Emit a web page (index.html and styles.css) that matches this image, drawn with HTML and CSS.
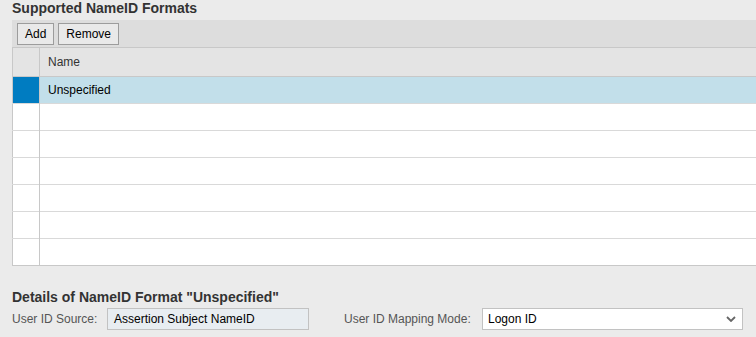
FILE: index.html
```html
<!DOCTYPE html>
<html lang="en">
<head>
  <meta charset="UTF-8" />
  <title>Supported NameID Formats</title>
  <link rel="stylesheet" href="styles.css">
</head>
<body>

<div class="page">
  <h2 class="section-title">Supported NameID Formats</h2>

  <div class="toolbar">
    <button class="btn">Add</button>
    <button class="btn">Remove</button>
  </div>

  <table class="grid">
    <thead>
      <tr><th class="sel"></th><th>Name</th></tr>
    </thead>
    <tbody>
      <tr class="selected"><td class="sel"></td><td>Unspecified</td></tr>
      <tr><td class="sel"></td><td></td></tr>
      <tr><td class="sel"></td><td></td></tr>
      <tr><td class="sel"></td><td></td></tr>
      <tr><td class="sel"></td><td></td></tr>
      <tr><td class="sel"></td><td></td></tr>
      <tr><td class="sel"></td><td></td></tr>
    </tbody>
  </table>

  <h2 class="section-title details">Details of NameID Format "Unspecified"</h2>

  <div class="form-row">
    <label class="lbl lbl-source">User ID Source:</label>
    <div class="field readonly">Assertion Subject NameID</div>
    <label class="lbl lbl-mode">User ID Mapping Mode:</label>
    <div class="field select">
      <span>Logon ID</span>
      <svg width="10" height="6" viewBox="0 0 10 6"><path d="M1 1 L5 5 L9 1" fill="none" stroke="#666" stroke-width="1.8"/></svg>
    </div>
  </div>
</div>

</body>
</html>
```

FILE: styles.css
```css
:root {
  --bg: #ebebeb;
  --toolbar: #dddddd;
  --header: #e4e4e4;
  --line: #c8c8c8;
  --row-line: #d9d9d9;
  --selected: #c2dfea;
  --accent: #007cc1;
  --text: #000;
  --muted: #555;
}

* { box-sizing: border-box; }

body {
  margin: 0;
  background: var(--bg);
  font-family: "Liberation Sans", Arial, sans-serif;
  font-size: 12px;
  color: var(--text);
  overflow: hidden;
}

.page {
  padding-left: 12px;
}

.section-title {
  margin: 0 0 4px;
  font-size: 14px;
  line-height: 16px;
  font-weight: bold;
  color: #333;
}

.section-title.details {
  margin: 23px 0 3px;
}

.toolbar {
  display: flex;
  align-items: center;
  gap: 4px;
  height: 27px;
  padding-left: 5px;
  background: var(--toolbar);
}

.btn {
  height: 22px;
  padding: 0 7px;
  font-family: inherit;
  font-size: 12px;
  color: #000;
  background: #e9e9e9;
  border: 1px solid #9c9c9c;
  border-radius: 0;
}

.grid {
  width: 100%;
  border-collapse: collapse;
  border-top: 1px solid var(--line);
  border-left: 1px solid var(--line);
  border-bottom: 1px solid var(--line);
}

.grid th {
  height: 29px;
  padding: 0 8px;
  text-align: left;
  font-weight: normal;
  color: #333;
  background: var(--header);
  border-bottom: 1px solid var(--line);
}

.grid td {
  height: 27px;
  padding: 0 8px;
  background: #fff;
  border-top: 1px solid var(--row-line);
}

.grid tbody tr:first-child td {
  border-top: 0;
  height: 27px;
}

.grid .sel {
  width: 27px;
  padding: 0;
  border-right: 1px solid var(--line);
}

.grid tr.selected td {
  background: var(--selected);
}

.grid tr.selected td.sel {
  background: var(--accent);
}

.form-row {
  display: flex;
  align-items: center;
  height: 22px;
}

.lbl {
  color: var(--muted);
}

.lbl-source { width: 95px; }
.lbl-mode { width: 138px; margin-left: 35px; }

.field {
  height: 22px;
  line-height: 20px;
  border: 1px solid #c2c2c2;
  padding: 0 6px;
}

.readonly {
  width: 202px;
  background: #e8edf1;
}

.select {
  display: flex;
  align-items: center;
  justify-content: space-between;
  width: 261px;
  padding: 0 6px 0 5px;
  background: #fff;
}
```
